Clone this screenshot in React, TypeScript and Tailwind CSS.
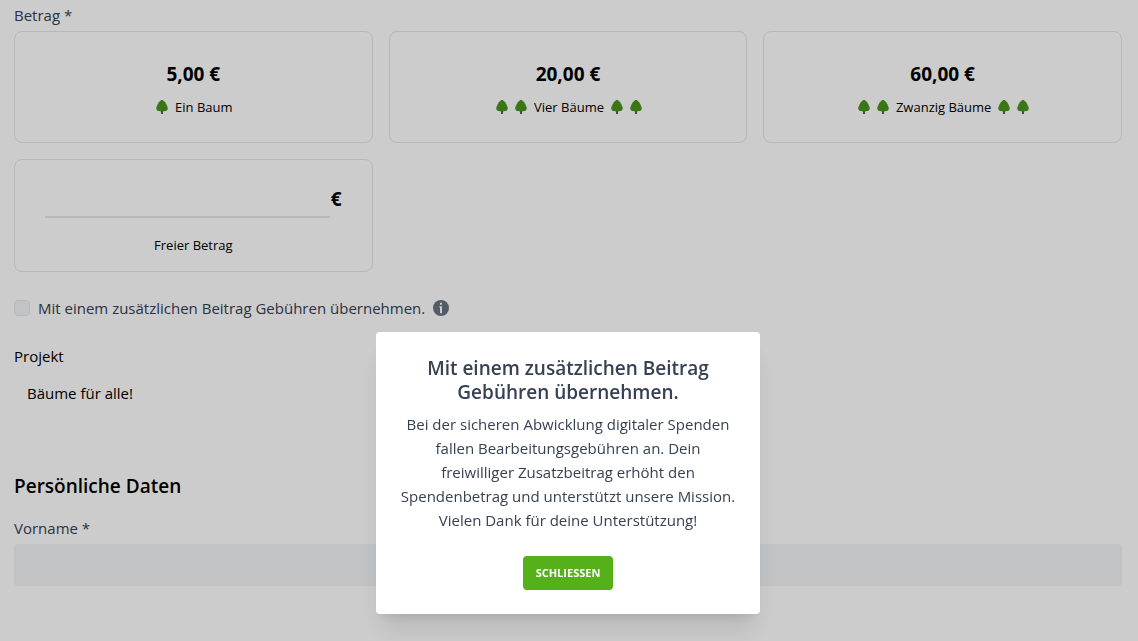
import React, { useState } from "react";

const amounts = [
  { value: "5", price: "5,00 €", text: "Ein Baum", before: 1, after: 0 },
  { value: "20", price: "20,00 €", text: "Vier Bäume", before: 2, after: 2 },
  { value: "60", price: "60,00 €", text: "Zwanzig Bäume", before: 2, after: 2 },
];

const Tree = () => (
  <svg viewBox="0 0 12 14" className="w-3 h-3.5 shrink-0" aria-hidden="true">
    <path d="M5 10h2v4H5z" fill="#7a4f3a" />
    <path
      d="M6 0C4.9 0 4.2 0.7 3.9 1.4C2.9 1.6 2.2 2.4 2.3 3.5C1.5 4 1.1 4.9 1.3 5.8C0.5 6.5 0.1 7.6 0.3 8.7C0.5 10.4 1.8 11.2 3.2 11.1C4.2 11.6 5.2 11.6 6 11.3C6.8 11.6 7.8 11.6 8.8 11.1C10.2 11.2 11.5 10.4 11.7 8.7C11.9 7.6 11.5 6.5 10.7 5.8C10.9 4.9 10.5 4 9.7 3.5C9.8 2.4 9.1 1.6 8.1 1.4C7.8 0.7 7.1 0 6 0Z"
      fill="#48941c"
    />
  </svg>
);

const Trees = ({ count }: { count: number }) => (
  <>
    {Array.from({ length: count }, (_, i) => (
      <Tree key={i} />
    ))}
  </>
);

const InfoIcon = () => (
  <svg viewBox="0 0 16 16" className="size-4" aria-hidden="true">
    <circle cx="8" cy="8" r="8" fill="currentColor" />
    <path d="M7 2.8h2v2H7zM6.4 6.2H9v7H7V7.4h-.6z" fill="#fff" />
  </svg>
);

const App = () => {
  const [open, setOpen] = useState(true);

  return (
    <div className="min-h-screen bg-white font-['Open_Sans',sans-serif] text-[15px] leading-6 text-black">
      <form className="pt-[3px] pl-3.5 pr-4 pb-10">
        <fieldset>
          <legend className="mb-1 text-gray-700">Betrag *</legend>
          <div className="grid grid-cols-3 items-start gap-4">
            {amounts.map((amount) => (
              <label
                key={amount.value}
                className="relative block rounded-lg border border-gray-200 p-6 text-center"
              >
                <input
                  type="radio"
                  name="amount"
                  value={amount.value}
                  className="sr-only"
                />
                <span className="block text-[19px] leading-9 font-bold">
                  {amount.price}
                </span>
                <span className="mt-1 flex items-center justify-center gap-[7px] pl-0.5 text-[13px] leading-[22px]">
                  <Trees count={amount.before} />
                  {amount.text}
                  <Trees count={amount.after} />
                </span>
              </label>
            ))}

            <div className="rounded-lg border border-gray-200 px-[30px] pt-5 pb-[15px]">
              <div className="flex items-center">
                <input
                  id="free"
                  type="text"
                  className="h-[38px] min-w-0 flex-1 border-b-2 border-gray-200 bg-transparent text-[19px] font-bold outline-none"
                />
                <span className="w-3 text-right text-[19px] font-bold">€</span>
              </div>
              <label
                htmlFor="free"
                className="mt-4 block text-center text-[13px] leading-[22px]"
              >
                Freier Betrag
              </label>
            </div>
          </div>
        </fieldset>

        <div className="mt-6 flex items-center gap-2 text-gray-700">
          <input
            id="fees"
            type="checkbox"
            className="size-4 appearance-none rounded-sm border border-gray-200 bg-gray-100"
          />
          <label htmlFor="fees">
            Mit einem zusätzlichen Beitrag Gebühren übernehmen.
          </label>
          <button
            type="button"
            aria-label="Info"
            className="text-gray-500"
            onClick={() => setOpen(true)}
          >
            <InfoIcon />
          </button>
        </div>

        <div className="mt-6">
          <label htmlFor="project" className="block">
            Projekt
          </label>
          <input
            id="project"
            readOnly
            value="Bäume für alle!"
            className="mt-1 block h-[42px] w-full bg-transparent px-[13px] outline-none"
          />
        </div>

        <h2 className="mt-15 text-[19px] leading-6 font-semibold">
          Persönliche Daten
        </h2>

        <div className="mt-[18px]">
          <label htmlFor="firstname" className="block text-gray-700">
            Vorname *
          </label>
          <input
            id="firstname"
            type="text"
            className="mt-1 block h-[42px] w-full rounded bg-gray-100 px-3 outline-none"
          />
        </div>
      </form>

      {open && (
        <div className="fixed inset-0 flex items-end justify-center bg-black/20 pl-3.5 pr-4 pb-[27px]">
          <div
            role="dialog"
            aria-labelledby="dialog-title"
            className="w-96 rounded bg-white p-6 text-center text-gray-700 shadow-xl"
          >
            <h3 id="dialog-title" className="text-[19px] leading-6 font-semibold">
              Mit einem zusätzlichen Beitrag Gebühren übernehmen.
            </h3>
            <p className="mt-2">
              Bei der sicheren Abwicklung digitaler Spenden fallen
              Bearbeitungsgebühren an. Dein freiwilliger Zusatzbeitrag erhöht
              den Spendenbetrag und unterstützt unsere Mission. Vielen Dank für
              deine Unterstützung!
            </p>
            <button
              type="button"
              onClick={() => setOpen(false)}
              className="mt-6 h-[34px] w-[90px] rounded bg-[#55b01a] text-[11px] font-bold text-white uppercase"
            >
              Schliessen
            </button>
          </div>
        </div>
      )}
    </div>
  );
};

export default App;
